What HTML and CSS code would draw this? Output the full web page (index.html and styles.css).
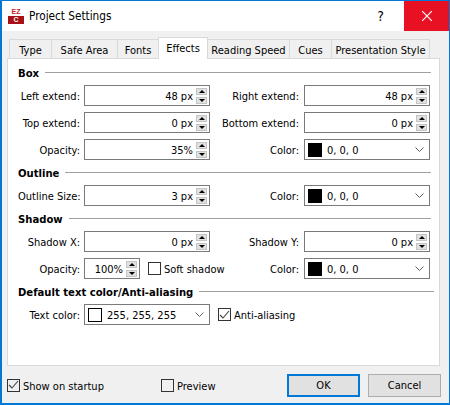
FILE: index.html
```html
<!DOCTYPE html>
<html>
  <head>
    <title>Project Settings</title>
    <link rel="stylesheet" href="styles.css">
  </head>
  <body>
    <div class="window">
      <div class="titlebar">
        <div class="logo"><span class="logo-top">EZ</span><span class="logo-bottom">C</span></div>
        <div class="title">Project Settings</div>
        <div class="help">?</div>
        <div class="close">
          <svg width="10" height="10" viewBox="0 0 10 10"><path d="M0 0L10 10M10 0L0 10" stroke="#fff" stroke-width="1.2" fill="none"/></svg>
        </div>
      </div>

      <div class="tabs">
        <div class="tab tab-type">Type</div>
        <div class="tab tab-safe">Safe Area</div>
        <div class="tab tab-fonts">Fonts</div>
        <div class="tab tab-effects active">Effects</div>
        <div class="tab tab-reading">Reading Speed</div>
        <div class="tab tab-cues">Cues</div>
        <div class="tab tab-style">Presentation Style</div>
      </div>

      <div class="pane">
        <div class="group"><b>Box</b><i></i></div>
        <div class="row">
          <label>Left extend:</label>
          <div class="spin"><span class="value">48 px</span><div class="arrows"><u class="up"></u><u class="down"></u></div></div>
          <label>Right extend:</label>
          <div class="spin"><span class="value">48 px</span><div class="arrows"><u class="up"></u><u class="down"></u></div></div>
        </div>
        <div class="row">
          <label>Top extend:</label>
          <div class="spin"><span class="value">0 px</span><div class="arrows"><u class="up"></u><u class="down"></u></div></div>
          <label>Bottom extend:</label>
          <div class="spin"><span class="value">0 px</span><div class="arrows"><u class="up"></u><u class="down"></u></div></div>
        </div>
        <div class="row">
          <label>Opacity:</label>
          <div class="spin"><span class="value">35%</span><div class="arrows"><u class="up"></u><u class="down"></u></div></div>
          <label>Color:</label>
          <div class="combo"><span class="swatch"></span><span class="combo-text">0, 0, 0</span><svg class="chevron" width="9" height="5" viewBox="0 0 9 5"><path d="M0.5 0.5L4.5 4.5L8.5 0.5" stroke="#606060" fill="none"/></svg></div>
        </div>

        <div class="group"><b>Outline</b><i></i></div>
        <div class="row">
          <label>Outline Size:</label>
          <div class="spin"><span class="value">3 px</span><div class="arrows"><u class="up"></u><u class="down"></u></div></div>
          <label>Color:</label>
          <div class="combo"><span class="swatch"></span><span class="combo-text">0, 0, 0</span><svg class="chevron" width="9" height="5" viewBox="0 0 9 5"><path d="M0.5 0.5L4.5 4.5L8.5 0.5" stroke="#606060" fill="none"/></svg></div>
        </div>

        <div class="group"><b>Shadow</b><i></i></div>
        <div class="row">
          <label>Shadow X:</label>
          <div class="spin"><span class="value">0 px</span><div class="arrows"><u class="up"></u><u class="down"></u></div></div>
          <label>Shadow Y:</label>
          <div class="spin"><span class="value">0 px</span><div class="arrows"><u class="up"></u><u class="down"></u></div></div>
        </div>
        <div class="row">
          <label>Opacity:</label>
          <div class="cell">
            <div class="spin spin-small"><span class="value">100%</span><div class="arrows"><u class="up"></u><u class="down"></u></div></div>
            <div class="check check-soft"><span class="box"></span><span class="check-text">Soft shadow</span></div>
          </div>
          <label>Color:</label>
          <div class="combo"><span class="swatch"></span><span class="combo-text">0, 0, 0</span><svg class="chevron" width="9" height="5" viewBox="0 0 9 5"><path d="M0.5 0.5L4.5 4.5L8.5 0.5" stroke="#606060" fill="none"/></svg></div>
        </div>

        <div class="group group-wide"><b>Default text color/Anti-aliasing</b><i></i></div>
        <div class="row">
          <label>Text color:</label>
          <div class="combo"><span class="swatch swatch-white"></span><span class="combo-text">255, 255, 255</span><svg class="chevron" width="9" height="5" viewBox="0 0 9 5"><path d="M0.5 0.5L4.5 4.5L8.5 0.5" stroke="#606060" fill="none"/></svg></div>
          <div class="check check-aa"><span class="box"><svg width="11" height="10" viewBox="0 0 11 10"><path d="M1 5L4 8L10 1" stroke="#444" stroke-width="1.1" fill="none"/></svg></span><span class="check-text">Anti-aliasing</span></div>
        </div>
      </div>

      <div class="footer">
        <div class="check check-startup"><span class="box"><svg width="11" height="10" viewBox="0 0 11 10"><path d="M1 5L4 8L10 1" stroke="#444" stroke-width="1.1" fill="none"/></svg></span><span class="check-text">Show on startup</span></div>
        <div class="check check-preview"><span class="box"></span><span class="check-text">Preview</span></div>
        <div class="btn btn-default">OK</div>
        <div class="btn">Cancel</div>
      </div>
    </div>
  </body>
</html>
```

FILE: styles.css
```css
html, body {
  margin: 0;
  padding: 0;
}
body {
  width: 450px;
  height: 405px;
  overflow: hidden;
  font-family: "DejaVu Sans Condensed", "DejaVu Sans", sans-serif;
  font-stretch: condensed;
  font-size: 11px;
  color: #000;
}
.window {
  box-sizing: border-box;
  width: 450px;
  height: 405px;
  background: #f0f0f0;
  border: 1px solid #0078d7;
  border-left-width: 2px;
  border-bottom-width: 2px;
}

/* title bar */
.titlebar {
  display: flex;
  align-items: center;
  height: 30px;
  background: #fff;
}
.logo {
  display: flex;
  flex-direction: column;
  width: 16px;
  height: 16px;
  margin-left: 6px;
  font-family: "Liberation Sans", sans-serif;
  font-size: 7px;
  font-weight: bold;
  line-height: 8px;
  text-align: center;
}
.logo-top {
  color: #c8202a;
}
.logo-bottom {
  background: #a80f17;
  color: #fff;
}
.title {
  flex: 1;
  margin-left: 5px;
  font-size: 11.7px;
}
.help {
  width: 45px;
  margin-right: 1px;
  text-align: center;
  font-size: 14px;
}
.close {
  display: flex;
  align-items: center;
  justify-content: center;
  width: 45px;
  height: 30px;
  background: #e81123;
}

/* tabs */
.tabs {
  display: flex;
  align-items: flex-end;
  height: 27px;
  padding-left: 7px;
}
.tab {
  box-sizing: border-box;
  height: 19px;
  margin-right: -1px;
  padding-top: 3px;
  border: 1px solid #d9d9d9;
  border-bottom: none;
  text-align: center;
  line-height: 15px;
  white-space: nowrap;
}
.tab.active {
  position: relative;
  height: 22px;
  margin-bottom: -1px;
  background: #fff;
  line-height: 16px;
}
.tab-type { width: 43px; }
.tab-safe { width: 67px; }
.tab-fonts { width: 42px; }
.tab-effects { width: 50px; }
.tab-reading { width: 83px; }
.tab-cues { width: 43px; }
.tab-style { width: 99px; }

/* page */
.pane {
  box-sizing: border-box;
  display: flex;
  flex-direction: column;
  gap: 6px;
  width: 433px;
  height: 308px;
  margin-left: 5px;
  padding: 7px 8px 0 10px;
  background: #fff;
  border: 1px solid #d9d9d9;
}
.group {
  display: flex;
  align-items: center;
  gap: 6px;
  height: 13px;
}
.group b {
  padding-top: 2px;
  font-weight: bold;
  font-size: 11.2px;
}
.group i {
  flex: 1;
  height: 1px;
  background: #a0a0a0;
}
.group-wide {
  margin-right: -3px;
}
.row {
  display: grid;
  grid-template-columns: 62px 126px 86px 126px;
  column-gap: 4px;
  height: 21px;
}
.row label {
  align-self: center;
  padding-top: 2px;
  text-align: right;
  white-space: nowrap;
}
.row label:nth-of-type(2) {
  padding-right: 1px;
}
.cell {
  display: flex;
  align-items: center;
}

/* spin box */
.spin {
  box-sizing: border-box;
  display: flex;
  align-items: center;
  justify-content: flex-end;
  height: 21px;
  padding-right: 2px;
  background: #fff;
  border: 1px solid #7a7a7a;
}
.spin-small {
  width: 56px;
  flex: none;
}
.value {
  margin-right: 3px;
  padding-top: 1px;
}
.arrows {
  display: flex;
  flex-direction: column;
  gap: 2px;
  width: 11px;
}
.arrows u {
  box-sizing: border-box;
  display: flex;
  align-items: center;
  justify-content: center;
  height: 7px;
  background: #e1e1e1;
  border: 1px solid #c4c4c4;
}
.up::before,
.down::before {
  content: "";
  border-left: 3px solid transparent;
  border-right: 3px solid transparent;
}
.up::before {
  border-bottom: 3px solid #000;
}
.down::before {
  border-top: 3px solid #000;
}

/* colour combo */
.combo {
  box-sizing: border-box;
  display: flex;
  align-items: center;
  height: 21px;
  padding: 0 4px 0 3px;
  background: #fff;
  border: 1px solid #7a7a7a;
}
.swatch {
  box-sizing: border-box;
  width: 14px;
  height: 14px;
  background: #000;
  border: 1px solid #000;
}
.swatch-white {
  background: #fff;
}
.combo-text {
  flex: 1;
  margin-left: 5px;
  padding-top: 1px;
}
.chevron {
  margin-right: 1px;
}

/* check boxes */
.check {
  display: flex;
  align-items: center;
  white-space: nowrap;
}
.check-text {
  padding-top: 2px;
}
.box {
  box-sizing: border-box;
  display: flex;
  align-items: center;
  justify-content: center;
  width: 13px;
  height: 13px;
  margin-right: 3px;
  background: #fff;
  border: 1px solid #333;
}
.check-soft {
  margin-left: 8px;
}
.check-aa {
  margin-left: 4px;
}

/* footer */
.footer {
  display: flex;
  align-items: center;
  height: 38px;
  padding-left: 5px;
}
.footer .box {
  background: transparent;
}
.check-startup {
  width: 154px;
}
.check-preview {
  width: 126px;
}
.btn {
  box-sizing: border-box;
  width: 73px;
  height: 23px;
  margin-right: 8px;
  background: #e1e1e1;
  border: 1px solid #adadad;
  line-height: 21px;
  text-align: center;
}
.btn-default {
  border: 2px solid #0078d7;
  line-height: 19px;
}
```
